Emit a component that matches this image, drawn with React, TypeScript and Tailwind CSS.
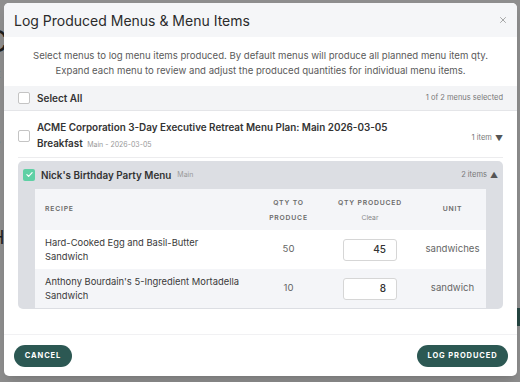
import { X } from 'lucide-react';

const font = { fontFamily: 'Inter, "Noto Sans", sans-serif' };

const Checkbox = ({ checked = false }: { checked?: boolean }) =>
    checked ? (
        <span className="w-[12px] h-[12px] rounded-[2px] bg-[#5fd0a5] flex items-center justify-center shrink-0">
            <svg viewBox="0 0 12 12" className="w-[9px] h-[9px]" fill="none" stroke="white" strokeWidth="1.6" strokeLinecap="round" strokeLinejoin="round">
                <path d="M2.5 6.2l2.3 2.3 4.7-5" />
            </svg>
        </span>
    ) : (
        <span className="w-[12px] h-[12px] rounded-[2px] border border-[#c4c4c4] bg-white shrink-0" />
    );

const rows = [
    { name: "Hard-Cooked Egg and Basil-Butter Sandwich", planned: 50, produced: 45, unit: 'sandwiches', bg: 'bg-white' },
    { name: "Anthony Bourdain's 5-Ingredient Mortadella Sandwich", planned: 10, produced: 8, unit: 'sandwich', bg: 'bg-[#f4f5f8]' },
];

export default function App() {
    return (
        <div className="relative w-[520px] h-[382px] overflow-hidden bg-[#8e8e8e] text-[#2f2f2f]" style={font}>
            {/* page behind the overlay */}
            <div className="pt-[26px] text-[#1e1e1e]">
                <div className="text-[30px] leading-[30px] -ml-[14px]">C</div>
                <div className="mt-[12px] text-[9px] -ml-[5px]">E</div>
                <div className="mt-[40px] text-[9px] leading-[13px] -ml-[5px]">t<br />e<br />a</div>
                <div className="mt-[20px] text-[9px] -ml-[5px]">t</div>
                <div className="mt-[30px] text-[18px] -ml-[9px]">H</div>
            </div>

            {/* modal */}
            <div className="absolute left-[4px] top-[3px] w-[513px] h-[373px] bg-white rounded-[5px] overflow-hidden flex flex-col shadow-lg">
                <div className="h-[34px] bg-[#f5f6f8] flex items-center justify-between pl-[10px] pr-[9px] shrink-0">
                    <h1 className="text-[14px] text-[#2b2b2b]">Log Produced Menus &amp; Menu Items</h1>
                    <X className="w-[10px] h-[10px] text-[#777]" strokeWidth={1.5} />
                </div>

                <p className="pt-[11px] pb-[8px] px-[12px] text-center text-[9.6px] leading-[15px] text-[#5a5a5a]">
                    Select menus to log menu items produced. By default menus will produce all planned menu item qty.<br />
                    Expand each menu to review and adjust the produced quantities for individual menu items.
                </p>

                <div className="h-[25px] bg-[#f3f4f6] border-b border-[#e4e5e8] flex items-center justify-between px-[14px] shrink-0">
                    <div className="flex items-center gap-[7px]">
                        <Checkbox />
                        <span className="text-[10px] font-semibold text-[#333]">Select All</span>
                    </div>
                    <span className="text-[7.5px] text-[#777]">1 of 2 menus selected</span>
                </div>

                <div className="flex-1 px-[14px]">
                    {/* ACME row */}
                    <div className="flex items-center gap-[7px] pt-[8px] pb-[4px] border-b border-[#ececee]">
                        <Checkbox />
                        <div className="flex-1 text-[9.9px] leading-[16px] font-semibold text-[#333]">
                            ACME Corporation 3-Day Executive Retreat Menu Plan: Main 2026-03-05<br />
                            Breakfast <span className="text-[7px] font-normal text-[#999] ml-[2px]">Main - 2026-03-05</span>
                        </div>
                        <span className="text-[7.5px] text-[#777] flex items-center gap-[3px] self-center pt-[4px]">1 item <span className="text-[8px] text-[#555]">▼</span></span>
                    </div>

                    {/* Nick's panel */}
                    <div className="mt-[3px] bg-[#dcdee3] rounded-[5px] pb-[1px]">
                        <div className="h-[28px] flex items-center justify-between pl-[5px] pr-[5px]">
                            <div className="flex items-center gap-[6px]">
                                <Checkbox checked />
                                <span className="text-[9.9px] font-semibold text-[#333]">Nick's Birthday Party Menu</span>
                                <span className="text-[7px] text-[#999]">Main</span>
                            </div>
                            <span className="text-[7.5px] text-[#777] flex items-center gap-[3px]">2 items <span className="text-[8px] text-[#555]">▲</span></span>
                        </div>

                        <div className="mx-[17px]">
                            <div className="grid grid-cols-[220px_67px_96px_69px] h-[41px] bg-[#f4f5f8] items-center text-[6.8px] font-semibold tracking-[0.8px] text-[#6a6a6a] uppercase">
                                <div className="pl-[10px]">Recipe</div>
                                <div className="text-center leading-[15px]">Qty to<br />Produce</div>
                                <div className="text-center leading-[15px]">Qty Produced<br /><span className="normal-case tracking-normal font-normal text-[#888]">Clear</span></div>
                                <div className="text-center">Unit</div>
                            </div>
                            {rows.map((r) => (
                                <div key={r.name} className={`grid grid-cols-[220px_67px_96px_69px] h-[39px] items-center ${r.bg}`}>
                                    <div className="pl-[10px] pr-[15px] text-[9.4px] leading-[14px] text-[#3a3a3a]">{r.name}</div>
                                    <div className="text-center text-[9.6px] text-[#666]">{r.planned}</div>
                                    <div className="flex justify-center">
                                        <div className="w-[54px] h-[22px] bg-white border border-[#d6d6d6] rounded-[3px] flex items-center justify-end pr-[10px] text-[10px] font-medium text-[#333]">{r.produced}</div>
                                    </div>
                                    <div className="text-center text-[9.6px] text-[#666]">{r.unit}</div>
                                </div>
                            ))}
                        </div>
                    </div>
                </div>

                <div className="h-[42px] border-t border-[#f1f1f3] flex items-start justify-between pl-[10px] pr-[9px] pt-[10px] shrink-0">
                    <button className="h-[22px] w-[58px] rounded-full bg-[#2c5853] text-white text-[7.5px] font-bold tracking-[0.9px]">CANCEL</button>
                    <button className="h-[22px] w-[91px] rounded-full bg-[#2c5853] text-white text-[7.5px] font-bold tracking-[0.9px]">LOG PRODUCED</button>
                </div>
            </div>

            <div className="absolute right-0 top-[308px] w-[3px] h-[18px] bg-[#24433f]" />
        </div>
    );
}
